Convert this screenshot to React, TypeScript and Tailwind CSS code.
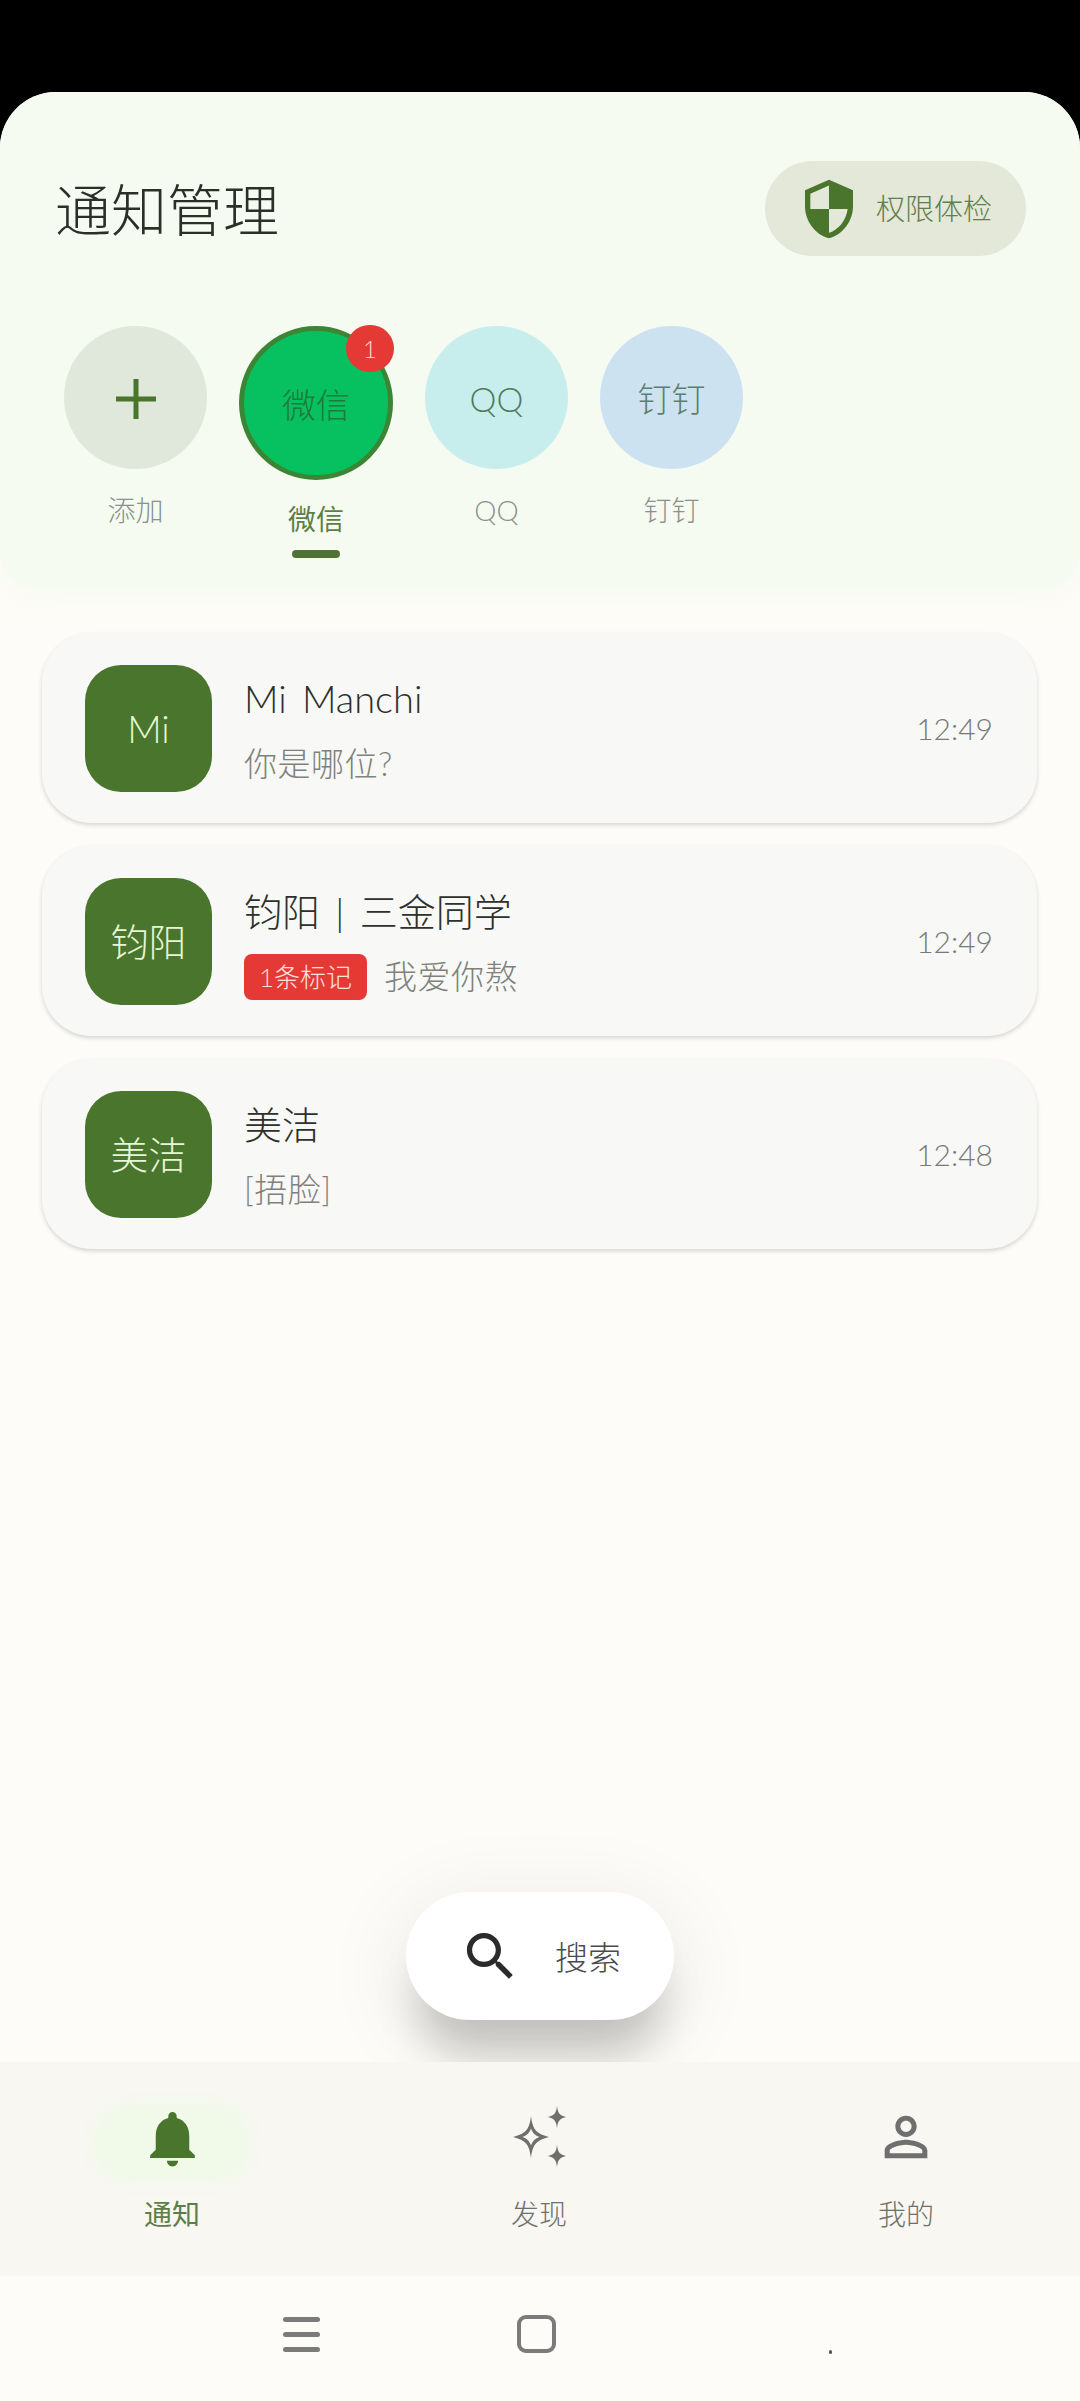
const font = { fontFamily: '"Lato", "Noto Sans CJK SC", sans-serif' };

function Circle({ bg, text, label, cls }: { bg: string; text: React.ReactNode; label: string; cls: string }) {
  return (
    <div className="flex flex-col items-center w-[143px]">
      <div className={`w-[143px] h-[143px] rounded-full flex items-center justify-center text-[34px] font-light pt-[2px] ${bg} ${cls}`}>{text}</div>
      <div className="mt-[21px] text-[28px] leading-[40px] font-light text-[#8c908a]">{label}</div>
    </div>
  );
}

function Card({ avatar, name, children, time }: { avatar: string; name: string; children: React.ReactNode; time: string }) {
  return (
    <div className="h-[190px] rounded-[50px] bg-[#f8f9f7] shadow-[0_2px_4px_rgba(0,0,0,0.16)] flex items-center pl-[43px] pr-[44px]">
      <div className="w-[127px] h-[127px] rounded-[36px] bg-[#4a752c] flex items-center justify-center text-[38px] font-light text-[#e6f5d5]">{avatar}</div>
      <div className="ml-[32px] flex-1 flex flex-col pt-[4px]">
        <div className="text-[38px] leading-[48px] font-light text-[#2d302b] [word-spacing:5px]">{name}</div>
        <div className="mt-[20px] h-[44px] flex items-center text-[33px] tracking-[0.5px] font-light text-[#7f827c]">{children}</div>
      </div>
      <div className="text-[30px] font-light text-[#777a74]">{time}</div>
    </div>
  );
}

export default function App() {
  return (
    <div style={font} className="w-[1080px] h-[2401px] bg-black pt-[92px] flex flex-col overflow-hidden">
      <div className="flex-1 flex flex-col rounded-t-[56px] bg-[#fefcf8] overflow-hidden">
        <header className="bg-[#f5fbf0] rounded-b-[40px] shadow-[0_8px_28px_rgba(245,251,240,0.9)] pt-[69px] pb-[31px]">
          <div className="flex items-center justify-between pl-[55px] pr-[54px]">
            <h1 className="text-[56px] font-light text-[#2b2e29] mt-[3px]">通知管理</h1>
            <div className="w-[261px] h-[95px] rounded-full bg-[#e3e8d8] flex items-center pl-[32px]">
              <svg viewBox="0 0 24 24" width="64" height="64" fill="#4a752c">
                <path d="M12 1L3 5v6c0 5.55 3.84 10.74 9 12 5.16-1.26 9-6.45 9-12V5l-9-4zm0 10.99h7c-.53 4.12-3.28 7.79-7 8.94V12H5V6.3l7-3.11v8.8z" />
              </svg>
              <span className="ml-[15px] text-[29px] font-light text-[#5f7f4c]">权限体检</span>
            </div>
          </div>
          <div className="mt-[70px] pl-[64px] flex gap-8 items-start">
            <Circle
              bg="bg-[#dfe8da]"
              cls=""
              label="添加"
              text={
                <svg viewBox="0 0 40 40" width="40" height="40" fill="#4a752c">
                  <rect x="17.5" y="0" width="5" height="40" />
                  <rect x="0" y="17.5" width="40" height="5" />
                </svg>
              }
            />
            <div className="flex flex-col items-center w-[154px]">
              <div className="relative w-[154px] h-[154px] rounded-full bg-[#07c160] border-[5px] border-[#3c8534] flex items-center justify-center pt-[2px] text-[34px] font-light text-[#1f7a3c]">
                微信
                <div className="absolute top-[-6px] right-[-6px] w-[48px] h-[47px] rounded-full bg-[#e53935] flex items-center justify-center text-[24px] font-light text-[#ffdcd8]">1</div>
              </div>
              <div className="mt-[19px] text-[28px] leading-[40px] font-normal text-[#5d7f47]">微信</div>
              <div className="mt-[11px] w-[48px] h-[8px] rounded-full bg-[#4f7335]" />
            </div>
            <Circle bg="bg-[#c7eeed]" cls="text-[#4f7a5a]" label="QQ" text="QQ" />
            <Circle bg="bg-[#cde2f1]" cls="text-[#5a7f6a]" label="钉钉" text="钉钉" />
          </div>
        </header>

        <div className="mt-[44px] mx-[42px] mr-[43px] flex flex-col gap-[23px]">
          <Card avatar="Mi" name="Mi Manchi" time="12:49">你是哪位?</Card>
          <Card avatar="钧阳" name="钧阳 | 三金同学" time="12:49">
            <span className="w-[123px] h-[46px] rounded-[8px] bg-[#e53935] flex items-center justify-center text-[26px] tracking-normal font-light text-[#ffe1dc] mr-[17px]">1条标记</span>
            我爱你熬
          </Card>
          <Card avatar="美洁" name="美洁" time="12:48">[捂脸]</Card>
        </div>

        <div className="flex-1 flex items-end justify-center pb-[42px]">
          <div className="h-[128px] rounded-full bg-white shadow-[0_46px_44px_-12px_rgba(0,0,0,0.2),0_16px_80px_16px_rgba(0,0,0,0.06)] flex items-center pl-[53px] pr-[53px]">
            <svg viewBox="0 0 24 24" width="63" height="63" fill="#2b2b2b">
              <path d="M15.5 14h-.79l-.28-.27C15.41 12.59 16 11.11 16 9.5 16 5.91 13.09 3 9.5 3S3 5.91 3 9.5 5.91 16 9.5 16c1.61 0 3.09-.59 4.23-1.57l.27.28v.79l5 4.99L20.49 19l-4.99-5zm-6 0C7.01 14 5 11.99 5 9.5S7.01 5 9.5 5 14 7.01 14 9.5 11.99 14 9.500 14z" />
            </svg>
            <span className="ml-[33px] mt-[4px] text-[33px] font-light text-[#4a4a4a]">搜索</span>
          </div>
        </div>

        <nav className="relative h-[214px] bg-[#f8f7f2] flex justify-between pl-[87px] pr-[89px] pt-[38px]">
          <div className="w-[170px] flex flex-col items-center">
            <div className="w-[170px] h-[86px] flex items-center justify-center">
              <div className="w-[140px] h-[58px] rounded-full bg-[#f1f9e9] shadow-[0_0_14px_12px_#f1f9e9] flex items-center justify-center">
                <svg viewBox="0 0 24 24" width="67" height="67" fill="#4a752c" className="-mt-[10px] shrink-0">
                  <path d="M12 22c1.1 0 2-.9 2-2h-4c0 1.1.89 2 2 2zm6-6v-5c0-3.07-1.64-5.64-4.5-6.32V4c0-.83-.67-1.5-1.500-1.500s-1.500.67-1.500 1.500v.68C7.63 5.36 6 7.920 6 11v5l-2 2v1h16v-1l-2-2z" />
                </svg>
              </div>
            </div>
            <div className="mt-[8px] text-[28px] leading-[40px] font-normal text-[#5d7f47]">通知</div>
          </div>
          <div className="w-[170px] flex flex-col items-center">
            <div className="h-[86px] flex items-center justify-center">
              <svg viewBox="0 0 64 64" width="64" height="64" fill="#6f6f6f" className="-mt-[10px]">
                <path fillRule="evenodd" d="M24 10 C25.5 22 28 27.5 42 31 C28 34.5 25.5 40 24 52 C22.500 40 20 34.5 6 31 C20 27.500 22.500 22 24 10 Z M24 22.500 C22.800 26 20.500 29.500 15.500 31 C20.500 32.500 22.800 36 24 39.500 C25.200 36 27.500 32.500 32.500 31 C27.500 29.500 25.200 26 24 22.500 Z" />
                <path d="M50 0 C51 7 52 9 59 11 C52 13 51 15 50 22 C49 15 48 13 41 11 C48 9 49 7 50 0 Z" />
                <path d="M50 39 C51 46 52 48 59 50 C52 52 51 54 50 61 C49 54 48 52 41 50 C48 48 49 46 50 39 Z" />
              </svg>
            </div>
            <div className="mt-[8px] text-[28px] leading-[40px] font-light text-[#6f716c]">发现</div>
          </div>
          <div className="w-[170px] flex flex-col items-center">
            <div className="h-[86px] flex items-center justify-center">
              <svg viewBox="0 0 24 24" width="64" height="64" fill="#6f6f6f" className="-mt-[12px]">
                <path d="M12 5.9c1.16 0 2.1.94 2.1 2.1s-.94 2.1-2.1 2.1S9.9 9.16 9.9 8s.94-2.1 2.1-2.1m0 9c2.97 0 6.1 1.46 6.1 2.1v1.1H5.9V17c0-.64 3.13-2.1 6.1-2.1M12 4C9.79 4 8 5.79 8 8s1.79 4 4 4 4-1.79 4-4-1.79-4-4-4zm0 9c-2.67 0-8 1.34-8 4v3h16v-3c0-2.66-5.33-4-8-4z" />
              </svg>
            </div>
            <div className="mt-[8px] text-[28px] leading-[40px] font-light text-[#6f716c]">我的</div>
          </div>
        </nav>

        <div className="relative h-[125px] flex items-start pt-[41px] pl-[283px]">
          <svg viewBox="0 0 37 35" width="37" height="35" fill="#7b7b7b">
            <rect x="0" y="0" width="37" height="5" rx="2.500" />
            <rect x="0" y="15" width="37" height="5" rx="2.500" />
            <rect x="0" y="30" width="37" height="5" rx="2.500" />
          </svg>
          <div className="ml-[197px] -mt-[2px] w-[39px] h-[38px] rounded-[9px] border-[4px] border-[#7b7b7b]" />
          <div className="ml-[273px] mt-[33px] w-[3px] h-[4px] rounded-full bg-[#555]" />
        </div>
      </div>
    </div>
  );
}
